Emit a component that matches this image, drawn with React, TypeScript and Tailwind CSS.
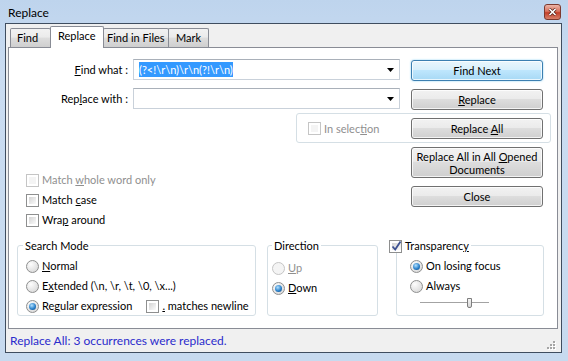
import type { ReactNode } from 'react';

const grayBg = 'bg-[linear-gradient(#f2f2f2,#ebebeb_45%,#dddddd_50%,#cfcfcf)]';
const grayBtn = `border-[#707070] ${grayBg} shadow-[inset_0_0_0_1px_rgba(255,255,255,0.75)]`;
const blueBtn =
  'border-[#3c7fb1] bg-[linear-gradient(#eaf6fd,#d9f0fc_45%,#bee6fd_50%,#a7d9f5)] shadow-[0_0_2px_#7fcdf3,inset_0_0_0_1px_rgba(255,255,255,0.75)]';

function Btn({ children, primary = false, className = '' }: { children: ReactNode; primary?: boolean; className?: string }) {
  return (
    <div className={`flex w-[132px] shrink-0 items-center justify-center rounded-[3px] border text-center leading-[13px] ${primary ? blueBtn : grayBtn} ${className}`}>
      <span>{children}</span>
    </div>
  );
}

function Box({ checked = false, disabled = false }: { checked?: boolean; disabled?: boolean }) {
  return (
    <span className={`flex h-[13px] w-[13px] shrink-0 border bg-white p-[2px] ${disabled ? 'border-[#c5c5c5]' : 'border-[#8e8f8f]'}`}>
      <span className={`flex flex-1 items-center justify-center ${disabled ? 'bg-[#f4f4f4]' : 'bg-[linear-gradient(135deg,#d3d3d3,#fbfbfb)]'}`}>
        {checked && (
          <svg width="9" height="9" viewBox="0 0 9 9" className="overflow-visible">
            <path d="M0.5 4.5 L3.2 7.5 L8.5 -0.5" fill="none" stroke="#3d5191" strokeWidth="1.8" />
          </svg>
        )}
      </span>
    </span>
  );
}

function Radio({ on = false, disabled = false }: { on?: boolean; disabled?: boolean }) {
  return (
    <span
      className={`flex h-[13px] w-[13px] shrink-0 items-center justify-center rounded-full border ${
        disabled ? 'border-[#c5c5c5] bg-[#f4f4f4]' : 'border-[#8e8f8f] bg-[radial-gradient(circle_at_35%_30%,#fdfdfd,#d2d2d2)]'
      }`}
    >
      {on && <span className="h-[7px] w-[7px] rounded-full bg-[radial-gradient(circle_at_40%_35%,#b3e1ff,#2b82cb_55%,#0c3d75)]" />}
    </span>
  );
}

function Opt({ children, radio = false, on = false, disabled = false }: { children: ReactNode; radio?: boolean; on?: boolean; disabled?: boolean }) {
  return (
    <div className={`flex h-[20px] items-center gap-[3px] ${disabled ? 'text-[#8f8f8f]' : ''}`}>
      {radio ? <Radio on={on} disabled={disabled} /> : <Box checked={on} disabled={disabled} />}
      <span>{children}</span>
    </div>
  );
}

function Combo({ children }: { children?: ReactNode }) {
  return (
    <div className="flex h-[21px] w-[267px] shrink-0 items-center border border-[#c9d1da] border-t-[#a9b0b9] bg-white pl-[5px] pr-[5px]">
      <div className="flex-1 leading-[14px]">{children}</div>
      <svg width="7" height="4" viewBox="0 0 7 4">
        <path d="M0 0 H7 L3.5 4 Z" fill="#000" />
      </svg>
    </div>
  );
}

const tabBase = 'flex items-center border border-b-0 border-[#898c95] rounded-t-[2px]';

export default function App() {
  return (
    <div className="flex h-[361px] w-[568px] flex-col overflow-hidden whitespace-nowrap bg-[linear-gradient(#bed4ed,#cadcf1_20%,#c7daef)] font-['Lato',sans-serif] text-[12px] text-black">
      {/* title bar */}
      <div className="flex h-[23px] items-start pl-[8px] pr-[7px]">
        <span className="mt-[5px] leading-[16px]">Replace</span>
        <div className="ml-auto mt-[4px] flex h-[16px] w-[17px] items-center justify-center rounded-[3px] border border-[#7d3a2f] bg-[linear-gradient(#ecb5a8,#d9735f_45%,#c3402a_55%,#d7806a)]">
          <svg width="9" height="8" viewBox="0 0 9 8">
            <path d="M1.5 1 L7.5 7 M7.5 1 L1.5 7" stroke="#4a1a12" strokeWidth="3" />
            <path d="M1.5 1 L7.5 7 M7.5 1 L1.5 7" stroke="#fff" strokeWidth="1.7" />
          </svg>
        </div>
      </div>

      <div className="flex flex-1 pb-[8px] pl-[5px] pr-[6px]">
        <div className="flex flex-1 flex-col border border-[#3f4d5f] bg-[#f0f0f0] pl-[2px] pr-[3px] pt-[2px]">
          {/* tabs */}
          <div className="flex h-[22px] items-end pl-[2px] text-[11px]">
            <div className={`${tabBase} mb-px h-[19px] w-[41px] pl-[6px] ${grayBg}`}>Find</div>
            <div className={`${tabBase} relative z-10 -ml-px h-[22px] w-[54px] bg-white pb-[2px] pl-[7px]`}>Replace</div>
            <div className={`${tabBase} -ml-px mb-px h-[19px] w-[66px] pl-[3px] ${grayBg}`}>Find in Files</div>
            <div className={`${tabBase} -ml-px mb-px h-[19px] w-[41px] pl-[7px] ${grayBg}`}>Mark</div>
          </div>

          {/* pane */}
          <div className="-mt-px flex h-[282px] flex-col border border-[#898c95] bg-white text-[11px]">
            <div className="mt-[11px] flex items-start">
              <div className="w-[124px] shrink-0 pr-[5px] text-right leading-[21px]">
                <u>F</u>ind what :
              </div>
              <Combo>
                <span className="bg-[#3399ff] py-px text-white">{'(?<!\\r\\n)\\r\\n(?!\\r\\n)'}</span>
              </Combo>
              <Btn primary className="ml-[11px] mt-px h-[21px]">Find Next</Btn>
            </div>

            <div className="mt-[7px] flex items-start">
              <div className="w-[124px] shrink-0 pr-[5px] text-right leading-[21px]">
                Rep<u>l</u>ace with :
              </div>
              <Combo />
              <Btn className="ml-[11px] mt-px h-[21px]">
                <u>R</u>eplace
              </Btn>
            </div>

            <div className="ml-[287px] mt-[3px] flex h-[30px] w-[255px] items-start rounded-[3px] border border-[#d5dfe5]">
              <div className="ml-[11px] mt-[8px] flex items-center gap-[3px] leading-[13px] text-[#8f8f8f]">
                <Box disabled />
                <span>
                  In selec<u>t</u>ion
                </span>
              </div>
              <Btn className="ml-auto mr-[7px] mt-[4px] h-[21px]">
                Replace <u>A</u>ll
              </Btn>
            </div>

            <div className="flex">
              <div className="flex flex-1 flex-col pl-[17px] pt-[27px]">
                <Opt disabled>
                  Match <u>w</u>hole word only
                </Opt>
                <Opt>
                  Match <u>c</u>ase
                </Opt>
                <Opt>
                  Wra<u>p</u> around
                </Opt>
              </div>
              <div className="mr-[14px] flex flex-col gap-[8px] pt-[4px]">
                <Btn className="h-[31px]">
                  Replace All in All <u>O</u>pened
                  <br />
                  Documents
                </Btn>
                <Btn className="h-[21px]">Close</Btn>
              </div>
            </div>

            <div className="mt-[15px] flex items-start">
              {/* Search Mode */}
              <div className="ml-[8px] flex h-[71px] w-[239px] flex-col rounded-[3px] border border-[#d5dfe5]">
                <div className="-mt-[7px] ml-[5px] self-start bg-white px-[2px] leading-[14px]">Search Mode</div>
                <div className="mt-[3px] flex flex-col pl-[8px]">
                  <Opt radio>
                    <u>N</u>ormal
                  </Opt>
                  <Opt radio>
                    E<u>x</u>tended {'(\\n, \\r, \\t, \\0, \\x...)'}
                  </Opt>
                  <div className="flex items-center">
                    <Opt radio on>
                      Re<u>g</u>ular expression
                    </Opt>
                    <div className="ml-[14px]">
                      <Opt>
                        <u>.</u> matches newline
                      </Opt>
                    </div>
                  </div>
                </div>
              </div>

              {/* Direction */}
              <div className="ml-[11px] flex h-[71px] w-[111px] flex-col rounded-[3px] border border-[#d5dfe5]">
                <div className="-mt-[7px] ml-[4px] self-start bg-white px-[2px] leading-[14px]">Direction</div>
                <div className="mt-[5px] flex flex-col pl-[4px]">
                  <Opt radio disabled>
                    <u>U</u>p
                  </Opt>
                  <Opt radio on>
                    <u>D</u>own
                  </Opt>
                </div>
              </div>

              {/* Transparency */}
              <div className="ml-[18px] flex h-[71px] w-[148px] flex-col rounded-[3px] border border-[#d5dfe5]">
                <div className="-ml-[8px] -mt-[7px] flex h-[14px] items-center gap-[3px] self-start bg-white pr-[2px]">
                  <Box checked />
                  <span className="leading-[14px]">
                    Transparenc<u>y</u>
                  </span>
                </div>
                <div className="mt-[3px] flex flex-col pl-[13px]">
                  <Opt radio on>
                    On losing focus
                  </Opt>
                  <Opt radio>Always</Opt>
                </div>
                <div className="ml-[23px] mt-[2px] flex h-[10px] items-center">
                  <div className="h-[2px] w-[47px] border-b border-t border-b-white border-t-[#a3a3a3]" />
                  <div className="h-[10px] w-[5px] rounded-b-[2px] border border-[#7d7d7d] bg-[linear-gradient(#f4f4f4,#d8d8d8)]" />
                  <div className="h-[2px] w-[17px] border-b border-t border-b-white border-t-[#a3a3a3]" />
                </div>
              </div>
            </div>
          </div>

          {/* status bar */}
          <div className="flex h-[23px] items-center pl-[2px] text-[#2b2bcc]">
            <span>Replace All: 3 occurrences were replaced.</span>
            <svg width="10" height="10" viewBox="0 0 10 10" className="mb-px ml-auto mr-px self-end">
              {[
                [8, 2],
                [5, 5],
                [8, 5],
                [2, 8],
                [5, 8],
                [8, 8],
              ].map(([x, y]) => (
                <g key={`${x}-${y}`}>
                  <rect x={x - 1} y={y - 1} width="2" height="2" fill="#ffffff" />
                  <rect x={x - 2} y={y - 2} width="2" height="2" fill="#a5a5a5" />
                </g>
              ))}
            </svg>
          </div>
        </div>
      </div>
    </div>
  );
}
